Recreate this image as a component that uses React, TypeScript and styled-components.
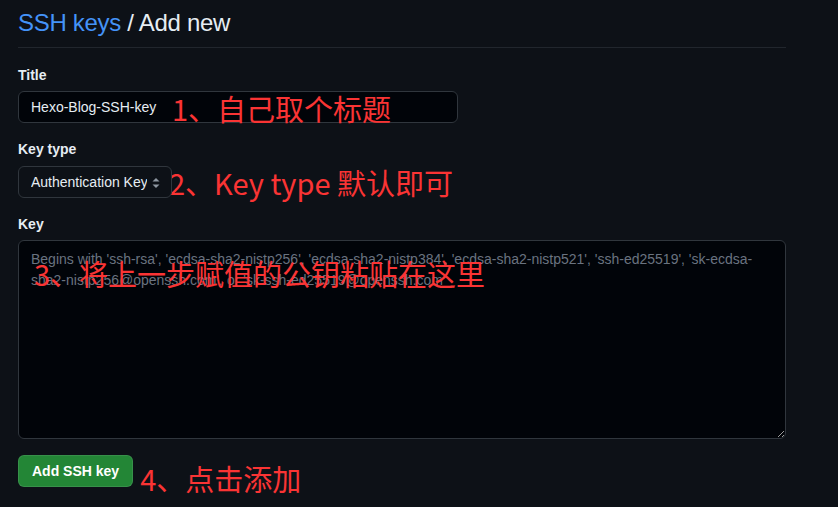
import React, { useState } from 'react';
import styled, { createGlobalStyle } from 'styled-components';

const GlobalStyle = createGlobalStyle`
  body {
    margin: 0;
    background-color: #0d1117;
    color: #e6edf3;
    font-family: 'Liberation Sans', Arial, sans-serif;
  }
`;

const Page = styled.div`
  width: 768px;
  padding: 8px 18px 0;
`;

const Header = styled.h2`
  margin: 0;
  padding-bottom: 9px;
  border-bottom: 1px solid #21262d;
  font-size: 24px;
  font-weight: 400;
  line-height: 30px;
  letter-spacing: -0.3px;
  color: #e6edf3;
`;

const Crumb = styled.a`
  color: #4493f8;
  text-decoration: none;
`;

const Form = styled.form`
  display: flex;
  flex-direction: column;
  gap: 16px;
  margin-top: 17px;
`;

const Group = styled.div`
  display: flex;
  flex-direction: column;
  gap: 6px;
`;

const Label = styled.label`
  font-size: 14px;
  font-weight: 700;
  line-height: 20px;
  color: #e6edf3;
`;

const Field = styled.div`
  position: relative;
  display: flex;
  align-items: center;
`;

const inputBase = `
  box-sizing: border-box;
  border: 1px solid #30363d;
  border-radius: 6px;
  background-color: #010409;
  color: #e6edf3;
  font-family: 'Liberation Sans', Arial, sans-serif;
  font-size: 14px;
  &:focus {
    outline: none;
    border-color: #1f6feb;
  }
`;

const TextInput = styled.input`
  ${inputBase}
  width: 440px;
  height: 32px;
  padding: 0 12px;
  line-height: 20px;
`;

const SelectWrap = styled.div`
  position: relative;
  width: 154px;
`;

const Select = styled.select`
  ${inputBase}
  appearance: none;
  width: 154px;
  height: 32px;
  padding: 0 24px 0 12px;
  background-color: #0d1117;
  cursor: pointer;
`;

const Arrows = styled.svg`
  position: absolute;
  right: 8px;
  top: 9px;
  pointer-events: none;
`;

const TextArea = styled.textarea`
  ${inputBase}
  width: 768px;
  height: 199px;
  padding: 8px 12px;
  line-height: 21px;
  resize: vertical;
  &::placeholder {
    color: #6a7380;
  }
`;

const Actions = styled.div`
  display: flex;
  align-items: flex-start;
  gap: 7px;
`;

const SubmitButton = styled.button`
  box-sizing: border-box;
  height: 32px;
  padding: 0 13px;
  border: 1px solid rgba(240, 246, 252, 0.1);
  border-radius: 6px;
  background-color: #238636;
  color: #ffffff;
  font-family: 'Liberation Sans', Arial, sans-serif;
  font-size: 14px;
  font-weight: 700;
  cursor: pointer;
`;

const Note = styled.span<{ $left?: number; $top?: number; $shift?: number; $drop?: number }>`
  font-family: 'Noto Sans CJK SC', 'Noto Sans', sans-serif;
  font-size: 29px;
  line-height: 32px;
  color: #fa3434;
  white-space: nowrap;
  pointer-events: none;
  margin-left: ${(p) => p.$shift ?? 0}px;
  margin-top: ${(p) => p.$drop ?? 0}px;
  ${(p) =>
    p.$left !== undefined
      ? `position: absolute; left: ${p.$left}px; top: ${p.$top}px;`
      : ''}
`;

const placeholder =
  "Begins with 'ssh-rsa', 'ecdsa-sha2-nistp256', 'ecdsa-sha2-nistp384', 'ecdsa-sha2-nistp521', 'ssh-ed25519', 'sk-ecdsa-sha2-nistp256@openssh.com', or 'sk-ssh-ed25519@openssh.com'";

export default function App() {
  const [title, setTitle] = useState('Hexo-Blog-SSH-key');
  const [key, setKey] = useState('');

  return (
    <>
      <GlobalStyle />
      <Page>
        <Header>
          <Crumb href="#">SSH keys</Crumb> / Add new
        </Header>
        <Form onSubmit={(e) => e.preventDefault()}>
          <Group>
            <Label htmlFor="title">Title</Label>
            <Field>
              <TextInput id="title" value={title} onChange={(e) => setTitle(e.target.value)} />
              <Note $left={154} $top={1}>1、自己取个标题</Note>
            </Field>
          </Group>
          <Group>
            <Label htmlFor="type">Key type</Label>
            <Field>
              <SelectWrap>
                <Select id="type" defaultValue="auth">
                  <option value="auth">Authentication Key</option>
                  <option value="sign">Signing Key</option>
                </Select>
                <Arrows width="16" height="16" viewBox="0 0 16 16" fill="#8d96a0">
                  <path d="M4.5 6.5 8 3l3.5 3.5z" />
                  <path d="M4.5 9.5 8 13l3.5-3.5z" />
                </Arrows>
              </SelectWrap>
              <Note $shift={-3} $drop={1}>2、Key type 默认即可</Note>
            </Field>
          </Group>
          <Group>
            <Label htmlFor="key">Key</Label>
            <Field>
              <TextArea id="key" placeholder={placeholder} value={key} onChange={(e) => setKey(e.target.value)} />
              <Note $left={16} $top={17}>3、将上一步赋值的公钥粘贴在这里</Note>
            </Field>
          </Group>
          <Actions>
            <SubmitButton type="submit">Add SSH key</SubmitButton>
            <Note $drop={7}>4、点击添加</Note>
          </Actions>
        </Form>
      </Page>
    </>
  );
}
